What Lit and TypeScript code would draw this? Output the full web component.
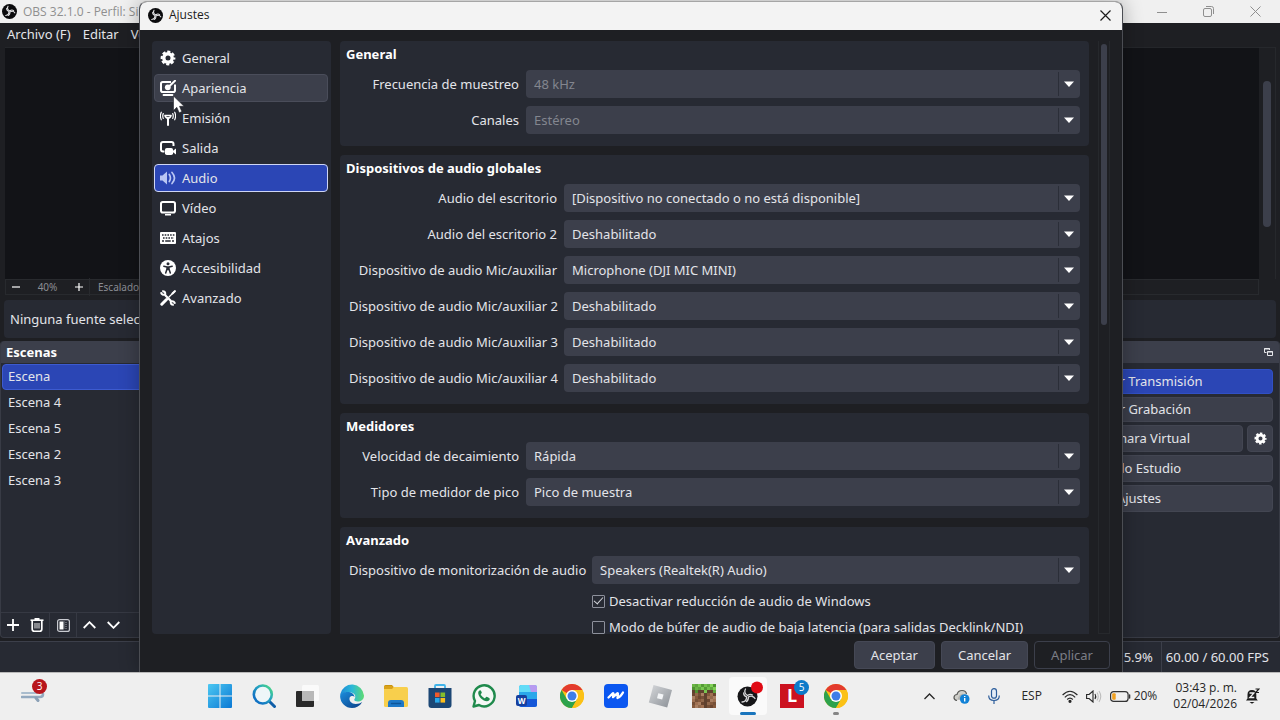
import { LitElement, html, css, svg, nothing, TemplateResult } from "lit";
import { customElement, property } from "lit/decorators.js";
import { classMap } from "lit/directives/class-map.js";

/* ---------- icons ---------- */

const obsLogo = (size: number) => html`<svg width=${size} height=${size} viewBox="0 0 24 24" aria-hidden="true">
  <circle cx="12" cy="12" r="12" fill="#0b0b0d" />
  <g fill="none" stroke="#e6e6e8" stroke-width="1.7" stroke-linecap="round">
    ${[0, 120, 240].map(
      (a) => svg`<path transform="rotate(${a} 12 12)" d="M12.4 11.2C9.6 9.6 8 6.6 9.6 3.6M12.4 11.2c1.600-1.400 4.200-2 6.200-.6" />`
    )}
  </g>
</svg>`;

const gear = html`<svg width="16" height="16" viewBox="0 0 16 16" fill="none" stroke="currentColor" aria-hidden="true">
  <circle cx="8" cy="8" r="4.200" stroke-width="3.400" />
  <circle cx="8" cy="8" r="6.300" stroke-width="2.200" stroke-dasharray="3.100 1.848" stroke-dashoffset="1.550" />
</svg>`;

const appearance = html`<svg width="16" height="16" viewBox="0 0 16 16" fill="none" stroke="currentColor" aria-hidden="true">
  <path d="M11 2H2.800Q1 2 1 3.800v6.400Q1 12 2.800 12h10.400Q15 12 15 10.200V4.500" stroke-width="2" />
  <path d="M3.500 15h9" stroke-width="1.800" stroke-linecap="round" />
  <circle cx="7.800" cy="7.300" r="2.900" fill="currentColor" stroke="none" />
  <path d="M9 6.500L15 .8" stroke-width="2" stroke-linecap="round" />
</svg>`;

const antenna = html`<svg width="16" height="16" viewBox="0 0 16 16" fill="none" stroke="currentColor" stroke-linecap="round" aria-hidden="true">
  <path d="M8 8v7" stroke-width="2" />
  <path d="M5 5.500Q5.500 8 8 8.200Q10.500 8 11 5.500" stroke-width="1.500" />
  <path d="M5.500 5.500h5" stroke-width="1.500" />
  <path d="M3.300 3.500Q2.200 6 3.300 8.500M12.700 3.500Q13.800 6 12.700 8.500M1.300 2.200Q-.5 6 1.300 9.800M14.700 2.200Q16.500 6 14.700 9.800" stroke-width="1.200" />
</svg>`;

const output = html`<svg width="16" height="16" viewBox="0 0 16 16" aria-hidden="true">
  <path d="M4.500 11.500H3Q1 11.500 1 9.500V4Q1 2 3 2h8.500Q13.500 2 13.500 4v2" fill="none" stroke="currentColor" stroke-width="2" />
  <rect x="5" y="8" width="8" height="7" rx="1.800" fill="currentColor" />
  <path d="M12 11.500l4-3v6z" fill="currentColor" />
</svg>`;

const speaker = html`<svg width="16" height="16" viewBox="0 0 16 16" fill="none" stroke="currentColor" aria-hidden="true">
  <path d="M0 5.500h2.500L7 1.500v13L2.500 10.500H0z" fill="currentColor" stroke="none" />
  <path d="M9.300 4.500Q11.500 8 9.300 11.500M12 2.500Q17 8 12 13.500" stroke-width="1.700" stroke-linecap="round" />
</svg>`;

const monitor = html`<svg width="16" height="16" viewBox="0 0 16 16" fill="none" stroke="currentColor" aria-hidden="true">
  <rect x="1" y="2" width="14" height="10.500" rx="1.800" stroke-width="2" />
  <path d="M5 14.700h6" stroke-width="1.400" />
</svg>`;

const keyboard = html`<svg width="16" height="16" viewBox="0 0 16 16" aria-hidden="true">
  <rect y="2" width="16" height="12" rx="1" fill="currentColor" />
  <g stroke="#272a33" stroke-width="1.400">
    <path d="M2 5h12.500" stroke-dasharray="1.600 1.100" />
    <path d="M3 8h11" stroke-dasharray="1.600 1.100" />
    <path d="M2 11h2M5.200 11h5.500M12 11h2" />
  </g>
</svg>`;

const accessibility = html`<svg width="16" height="16" viewBox="0 0 16 16" aria-hidden="true">
  <circle cx="8" cy="8" r="8" fill="currentColor" />
  <circle cx="8" cy="3.700" r="1.500" fill="#272a33" />
  <path d="M3.800 6.200L7 6.900V9L5.700 13M12.200 6.200L9 6.900V9l1.300 4M7 6.900h2M7.500 7v2.500h1V7" stroke="#272a33" stroke-width="1.500" fill="none" stroke-linecap="round" stroke-linejoin="round" />
</svg>`;

const tools = html`<svg width="16" height="16" viewBox="0 0 16 16" fill="none" stroke="currentColor" aria-hidden="true">
  <path d="M5 5L11 11" stroke-width="2.200" />
  <path d="M2.200 1.200Q5.800 1 5.200 4.700Q1.600 5.400 1 2.200" stroke-width="2" />
  <path d="M13.800 14.800Q10.200 15 10.800 11.300Q14.400 10.600 15 13.800" stroke-width="2" />
  <path d="M15 1L9 7" stroke-width="1.300" stroke-linecap="round" />
  <path d="M14.800 1.200L12.500 3.500" stroke-width="2" stroke-linecap="round" />
  <path d="M6.500 9.500L1.800 14.200" stroke-width="3" stroke-linecap="round" />
</svg>`;

const chromeLogo = html`<svg width="24" height="24" viewBox="0 0 24 24" aria-hidden="true">
  <circle cx="12" cy="12" r="12" fill="#fbc116" />
  <path d="M12 12L1.600 6A12 12 0 0 1 22.400 6H12z" fill="#e33b2e" />
  <path d="M1.600 6A12 12 0 0 0 12 24l5.200-9L12 12 6.800 15z" fill="#2da24c" />
  <path d="M22.400 6H12l5.200 9L12 24A12 12 0 0 0 22.400 6z" fill="#fbc116" />
  <circle cx="12" cy="12" r="6" fill="#fff" />
  <circle cx="12" cy="12" r="4.500" fill="#3f7ee8" />
</svg>`;

const grass = ["#6ab545", "#559a36", "#80d055", "#5fa53f", "#72c04b", "#4f9232", "#78c850", "#60a83f"];
const dirt = ["#85593c", "#a07152", "#6b4630", "#92694c", "#765037", "#aa8063", "#5f412e"];

const blockIcon = html`<svg width="24" height="24" viewBox="0 0 8 8" shape-rendering="crispEdges" aria-hidden="true">
  ${Array.from({ length: 64 }, (_, i) => {
    const x = i % 8;
    const y = Math.floor(i / 8);
    const green = y < 2 || (y === 2 && x % 3 === 1);
    return svg`<rect x=${x} y=${y} width="1" height="1" fill=${green ? grass[(x * 3 + y * 5) % 8] : dirt[(x * 5 + y * 3 + x * y) % 7]} />`;
  })}
</svg>`;

const taskIcons: Record<string, TemplateResult> = {
  Inicio: html`<svg width="24" height="24" viewBox="0 0 24 24" aria-hidden="true">
    <defs><linearGradient id="w" x1="0" y1="0" x2="1" y2="1"><stop offset="0" stop-color="#4cc8f2" /><stop offset="1" stop-color="#0a78d4" /></linearGradient></defs>
    <path d="M0 1Q0 0 1 0h10.500v11.500H0zM12.500 0H23Q24 0 24 1v10.500H12.500zM0 12.500h11.500V24H1Q0 24 0 23zM12.500 12.500H24V23Q24 24 23 24H12.500z" fill="url(#w)" />
  </svg>`,
  Buscar: html`<svg width="24" height="24" viewBox="0 0 24 24" fill="none" aria-hidden="true">
    <defs><linearGradient id="s" x1="0" y1="1" x2="1" y2="0"><stop offset=".2" stop-color="#1173c4" /><stop offset=".6" stop-color="#27a5c0" /><stop offset="1" stop-color="#4fe07c" /></linearGradient></defs>
    <path d="M17 17l5.500 5.500" stroke="#0f5ea8" stroke-width="3" stroke-linecap="round" />
    <circle cx="10.800" cy="10.500" r="9" fill="#eef6f8" stroke="url(#s)" stroke-width="2.600" />
  </svg>`,
  "Vista de tareas": html`<svg width="24" height="24" viewBox="0 0 24 24" aria-hidden="true">
    <rect x="0" y="7" width="18" height="16" rx="1" fill="#2a2a2a" />
    <rect x="6" y="1" width="17" height="16" rx="1.500" fill="#fafafa" />
    <path d="M6 7h12v10H7Q6 17 6 16z" fill="#b9b9b9" />
  </svg>`,
  Edge: html`<svg width="24" height="24" viewBox="0 0 24 24" aria-hidden="true">
    <defs>
      <linearGradient id="e1" x1="0" y1="0" x2="1" y2="0"><stop offset="0" stop-color="#1e8ad6" /><stop offset=".5" stop-color="#2bb8d8" /><stop offset="1" stop-color="#5edb72" /></linearGradient>
      <linearGradient id="e2" x1="0" y1="0" x2="1" y2="1"><stop offset="0" stop-color="#1b8ddd" /><stop offset="1" stop-color="#0b3f86" /></linearGradient>
    </defs>
    <path d="M.3 10A12 12 0 0 1 24 11.500c0 4-3 6-6.500 6-2.500 0-3.800-1-3-2.500 1.500-2 1-5.500-3-6.500C7 7.500 2.500 8.500.3 12z" fill="url(#e1)" />
    <path d="M.1 12C1 9 5 7.500 9 8c3.500.5 5.500 3 5.500 5-1-1.500-4-1.500-4.800.5-1.200 3 2 6.500 6 6.500 2.800 0 4.800-1 6.500-2C20 22 16 24 12 24A12 12 0 0 1 .1 12z" fill="url(#e2)" />
  </svg>`,
  Explorador: html`<svg width="24" height="24" viewBox="0 0 24 24" aria-hidden="true">
    <path d="M0 2.500Q0 1 1.500 1H8l2.500 3H0z" fill="#c9930c" />
    <rect y="3" width="24" height="20" rx="1.500" fill="#f8cf4c" />
    <path d="M0 2h8l1.500 1.500L8 5H0z" fill="#d9a21b" />
    <path d="M4 23v-4q0-3 3-3h10q3 0 3 3v4z" fill="#1d78c8" />
    <path d="M7.500 19.500h9" stroke="#0d5599" stroke-width="1.500" stroke-linecap="round" />
  </svg>`,
  "Microsoft Store": html`<svg width="24" height="24" viewBox="0 0 24 24" aria-hidden="true">
    <path d="M7 5V2q0-1 1-1h8q1 0 1 1v3" fill="none" stroke="#40b4ea" stroke-width="1.800" />
    <path d="M.5 4h23v17q0 3-3 3h-17q-3 0-3-3z" fill="#1c4775" />
    <path d="M7 8.500h4.600v4.600H7z" fill="#f05a2a" /><path d="M12.500 8.500h4.600v4.600h-4.600z" fill="#84bf2c" />
    <path d="M7 14h4.600v4.600H7z" fill="#28a8ea" /><path d="M12.500 14h4.600v4.600h-4.600z" fill="#fcbf1c" />
  </svg>`,
  WhatsApp: html`<svg width="24" height="24" viewBox="0 0 24 24" aria-hidden="true">
    <path d="M1.500 22.500L3 17A10.500 10.500 0 1 1 7 21z" fill="#f4f8f5" stroke="#1f8a4c" stroke-width="2.400" stroke-linejoin="round" />
    <path d="M8.200 6.300c-.8 0-2 1-2 2.700 0 3.500 4.800 8.300 8.600 8.300 1.800 0 3-1.300 3-2.600 0-.5-2.900-2-3.300-1.900-.6 0-1.100 1.500-1.600 1.500-1 0-4-2.700-4.200-4 0-.5 1.100-1 1.100-1.600 0-.5-1-2.400-1.600-2.400z" fill="#1f8a4c" />
  </svg>`,
  Word: html`<svg width="24" height="24" viewBox="0 0 24 24" aria-hidden="true">
    <rect x="3" y="1" width="18" height="22" rx="2.500" fill="#2aa7ea" />
    <path d="M3 8V3.500Q3 1 5.500 1h13Q21 1 21 3.500V8z" fill="#63dcf7" />
    <path d="M13 1h5.500Q21 1 21 3.500V8h-6z" fill="#b79af0" />
    <path d="M3 15h18v5.500q0 2.500-2.500 2.500h-13Q3 23 3 20.500z" fill="#1557d8" />
    <rect x="0" y="11" width="11" height="11" rx="2" fill="#163f9e" />
    <text x="5.500" y="19.500" font-size="8" font-weight="700" text-anchor="middle" fill="#fff">W</text>
  </svg>`,
  Chrome: chromeLogo,
  Meetings: html`<svg width="24" height="24" viewBox="0 0 24 24" aria-hidden="true">
    <rect width="24" height="24" rx="4" fill="#0b57f0" />
    <path d="M4.500 13.500L8.800 9.300Q9.500 9 9.500 10L9 13.200L13.300 9.300Q14 9 14 10L13.500 14Q16.500 13 19 8.500" fill="none" stroke="#fff" stroke-width="2.300" stroke-linecap="round" stroke-linejoin="round" />
  </svg>`,
  Studio: html`<svg width="24" height="24" viewBox="0 0 24 24" aria-hidden="true">
    <defs><linearGradient id="r" x1="0" y1="0" x2="1" y2="1"><stop offset="0" stop-color="#d6d8db" /><stop offset="1" stop-color="#8a8f95" /></linearGradient></defs>
    <path d="M5.500 1L24 6l-4.800 17.500L.8 18.500z" fill="url(#r)" />
    <path d="M10.300 9.200l5.200 1.300-1.300 5-5.200-1.300z" fill="#f3f5f7" />
  </svg>`,
  Bloques: blockIcon,
  "OBS Studio": html`<svg width="28" height="24" viewBox="0 0 28 24" overflow="visible" aria-hidden="true">
    <circle cx="13.500" cy="12.500" r="10" fill="#161618" />
    <g fill="none" stroke="#d8d8da" stroke-width="1.300" stroke-linecap="round">
      ${[0, 120, 240].map((a) => svg`<path transform="rotate(${a} 13.500 12.500)" d="M13.500 11.500C11 10 10 7.500 11.500 5M13.500 11.500c1.500-1 3.500-1.500 5-.5" />`)}
    </g>
    <circle cx="23" cy="3.500" r="6" fill="#e00a14" />
  </svg>`,
  Lector: html`<svg width="24" height="24" viewBox="0 0 24 24" aria-hidden="true">
    <rect width="24" height="24" fill="#cc1220" />
    <text x="12" y="18" font-size="18" font-weight="700" text-anchor="middle" fill="#fff">L</text>
  </svg>`,
  "Google Chrome": chromeLogo,
};

/* ---------- drop-down row ---------- */

@customElement("obs-select")
class ObsSelect extends LitElement {
  @property() label = "";
  @property() value = "";
  @property({ type: Boolean }) disabled = false;

  static styles = css`
    :host { display: grid; grid-template-columns: subgrid; grid-column: 1 / -1; align-items: center; }
    label { text-align: right; white-space: nowrap; color: #e3e4e9; }
    .box { display: grid; grid-template-columns: minmax(0, 1fr) 22px; height: 28px; }
    select {
      grid-area: 1 / 1 / 2 / 3; appearance: none; min-width: 0; margin: 0; padding: 0 30px 0 8px;
      border: 0; border-radius: 4px; background: #3c3f4b; color: #e3e4e9; font: inherit; opacity: 1;
    }
    select:disabled { color: #83868f; opacity: 1; }
    .arrow {
      grid-area: 1 / 2 / 2 / 3; display: flex; align-items: center; justify-content: center;
      margin: 2px 0; padding-right: 1px; border-left: 1px solid #2b2e38; pointer-events: none;
    }
  `;

  render() {
    return html`
      <label for="field">${this.label}</label>
      <div class="box">
        <select id="field" ?disabled=${this.disabled}><option>${this.value}</option></select>
        <span class="arrow"><svg width="10" height="6" viewBox="0 0 10 6" aria-hidden="true"><path d="M0 .5h10L5 6z" fill="#fff" /></svg></span>
      </div>`;
  }
}

/* ---------- settings dialog ---------- */

interface Field { label: string; value: string; disabled?: boolean }
interface Group { title: string; size: string; fields: Field[]; checks?: { label: string; on: boolean }[] }

const mic = "Dispositivo de audio Mic/auxiliar";
const off = "Deshabilitado";

const groups: Group[] = [
  { title: "General", size: "narrow", fields: [
    { label: "Frecuencia de muestreo", value: "48 kHz", disabled: true },
    { label: "Canales", value: "Estéreo", disabled: true },
  ] },
  { title: "Dispositivos de audio globales", size: "medium", fields: [
    { label: "Audio del escritorio", value: "[Dispositivo no conectado o no está disponible]" },
    { label: "Audio del escritorio 2", value: off },
    { label: mic, value: "Microphone (DJI MIC MINI)" },
    { label: `${mic} 2`, value: off },
    { label: `${mic} 3`, value: off },
    { label: `${mic} 4`, value: off },
  ] },
  { title: "Medidores", size: "narrow", fields: [
    { label: "Velocidad de decaimiento", value: "Rápida" },
    { label: "Tipo de medidor de pico", value: "Pico de muestra" },
  ] },
  { title: "Avanzado", size: "wide", fields: [
    { label: "Dispositivo de monitorización de audio", value: "Speakers (Realtek(R) Audio)" },
  ], checks: [
    { label: "Desactivar reducción de audio de Windows", on: true },
    { label: "Modo de búfer de audio de baja latencia (para salidas Decklink/NDI)", on: false },
  ] },
];

const sections: [string, TemplateResult][] = [
  ["General", gear], ["Apariencia", appearance], ["Emisión", antenna], ["Salida", output], ["Audio", speaker],
  ["Vídeo", monitor], ["Atajos", keyboard], ["Accesibilidad", accessibility], ["Avanzado", tools],
];

@customElement("settings-dialog")
class SettingsDialog extends LitElement {
  static styles = css`
    :host {
      display: flex; flex-direction: column; box-sizing: border-box; overflow: hidden;
      border: 1px solid #4b4d53; border-bottom: 0; border-top-color: #a5a5a5;
      border-radius: 8px 8px 0 0; background: #1e1f23; color: #e3e4e9;
    }
    * { box-sizing: border-box; }
    button { font: inherit; }
    .title { display: flex; align-items: center; gap: 6px; height: 28px; flex: none; padding: 0 9px 2px 8px; background: #f3f3f3; color: #1b1b1b; font-family: "Open Sans", "Noto Sans", sans-serif; font-size: 12px; }
    .title span { flex: 1; }
    .close { display: grid; place-items: center; width: 16px; height: 16px; padding: 0; border: 0; background: none; color: #1b1b1b; }
    .body { flex: 1; min-height: 0; display: flex; gap: 9px; padding: 11px 12px 0; }
    nav { width: 179px; flex: none; display: flex; flex-direction: column; gap: 2px; padding: 3px 3px 3px 2px; border-radius: 4px; background: #272a33; }
    .item { display: flex; align-items: center; gap: 6px; height: 28px; padding: 0 5px; border: 1px solid transparent; border-radius: 4px; background: none; color: #e3e4e9; text-align: left; }
    .item svg { color: #fff; }
    .item.hover { background: #3c3f4b; border-color: #4a4d5a; }
    .item.active { background: #2b46b5; border-color: #ced5f5; }
    .item.active svg { color: #b9c6f3; }
    .scroll { flex: 1; min-width: 0; display: flex; gap: 9px; }
    .groups { flex: 1; min-width: 0; overflow: hidden; display: flex; flex-direction: column; gap: 9px; }
    .group { flex: none; margin: 0; padding: 3px 9px 12px 6px; border-radius: 4px; background: #272a33; }
    h2 { margin: 0 0 6px; font-size: 13px; line-height: 20px; font-weight: 700; color: #fff; }
    .fields { display: grid; gap: 8px 7px; padding-left: 3px; }
    .narrow { grid-template-columns: 170px minmax(0, 1fr); }
    .medium { grid-template-columns: 208px minmax(0, 1fr); }
    .wide { grid-template-columns: 236px minmax(0, 1fr); }
    .check { grid-column: 2; display: flex; align-items: center; gap: 4px; height: 18px; white-space: nowrap; }
    .check input { appearance: none; display: grid; place-items: center; width: 13px; height: 13px; margin: 0; border: 1px solid #8d909b; border-radius: 1px; }
    .check input:checked::before { content: ""; width: 8px; height: 4px; margin-top: -3px; border: solid #d4d6dc; border-width: 0 0 1px 1px; transform: rotate(-48deg); }
    .track { width: 12px; flex: none; padding: 3px 2px; border: 1px solid #26282c; border-width: 0 1px 1px; }
    .thumb { height: 48%; border-radius: 3px; background: #3c3f4b; }
    footer { display: flex; justify-content: flex-end; gap: 6px; padding: 7px 12px 3px; }
    .push { height: 28px; padding: 0 16px; border: 1px solid #454855; border-radius: 4px; background: #3c3f4b; color: #e3e4e9; }
    .push:disabled { background: #1e1f23; border-color: #3c3f4b; color: #7b7d86; }
  `;

  render() {
    return html`
      <header class="title">
        ${obsLogo(15)}<span>Ajustes</span>
        <button class="close" aria-label="Cerrar"><svg width="11" height="11" viewBox="0 0 11 11" stroke="currentColor" stroke-width="1.200"><path d="M.5.5l10 10M10.500.5l-10 10" /></svg></button>
      </header>
      <div class="body">
        <nav>
          ${sections.map(([name, icon]) => html`<button class=${classMap({ item: true, hover: name === "Apariencia", active: name === "Audio" })}>${icon}<span>${name}</span></button>`)}
        </nav>
        <div class="scroll">
          <div class="groups">
            ${groups.map((g) => html`<section class="group">
              <h2>${g.title}</h2>
              <div class="fields ${g.size}">
                ${g.fields.map((f) => html`<obs-select .label=${f.label} .value=${f.value} .disabled=${!!f.disabled}></obs-select>`)}
                ${g.checks?.map((c) => html`<label class="check"><input type="checkbox" .checked=${c.on} />${c.label}</label>`) ?? nothing}
              </div>
            </section>`)}
          </div>
          <div class="track"><div class="thumb"></div></div>
        </div>
      </div>
      <footer>
        <button class="push">Aceptar</button><button class="push">Cancelar</button><button class="push" disabled>Aplicar</button>
      </footer>`;
  }
}

/* ---------- main window ---------- */

@customElement("main-window")
class MainWindow extends LitElement {
  static styles = css`
    :host { display: flex; flex-direction: column; background: #1e1f23; color: #e3e4e9; white-space: nowrap; }
    * { box-sizing: border-box; }
    button { font: inherit; color: inherit; border: 0; background: none; padding: 0; }
    .title { display: flex; align-items: center; gap: 6px; height: 23px; flex: none; padding: 0 16px 0 2px; background: #f0f0f0; color: #8f8f8f; font-family: "Open Sans", "Noto Sans", sans-serif; font-size: 12px; }
    .title span { flex: 1; }
    .wins { display: flex; gap: 30px; }
    .wins button { display: grid; place-items: center; width: 17px; height: 16px; }
    .menu { display: flex; gap: 12px; height: 24px; flex: none; align-items: center; padding: 0 7px 2px; }
    .preview { flex: 232 1 0; display: flex; padding: 0 4px 0 5px; }
    .canvas { flex: 1; background: #121317; border-top: 1px solid #24262a; }
    .vtrack { width: 17px; padding: 33px 4px 52px; border: 1px solid #26282c; border-width: 1px 1px 0 0; }
    .vthumb { height: 100%; border-radius: 4px; background: #3c3f4b; }
    .zoom { display: flex; align-items: center; height: 16px; flex: none; margin: 0 21px 0 5px; border: 1px solid #282a2e; font-size: 10px; color: #8b8d94; }
    .zoom button { width: 20px; height: 14px; display: grid; place-items: center; color: #fff; }
    .pct { width: 43px; text-align: center; }
    .scale { border-left: 1px solid #282a2e; padding-left: 8px; }
    .context { height: 38px; flex: none; display: flex; align-items: center; margin: 5px 4px 3px; padding: 0 6px; border-radius: 4px; background: #272a33; }
    .docks { flex: 297 1 0; display: flex; justify-content: space-between; }
    .dock { width: 278px; display: flex; flex-direction: column; border: 1px solid #383b45; border-top: 0; border-radius: 4px; background: #272a33; }
    .head { display: flex; align-items: center; justify-content: space-between; height: 22px; flex: none; padding: 0 6px 0 5px; border-radius: 4px 4px 0 0; background: #3c3f4b; font-weight: 700; color: #fff; }
    ul { flex: 1; margin: 0; padding: 1px; list-style: none; }
    li { height: 26px; line-height: 22px; padding: 0 5px; border: 1px solid transparent; border-radius: 4px; }
    .on { background: #2b46b5; border-color: #3d5bd0; }
    .tools { display: flex; align-items: center; height: 25px; flex: none; border-top: 1px solid #363943; color: #fff; }
    .tools button { display: grid; place-items: center; width: 24px; height: 24px; }
    .tools .wide { width: 28px; border: 1px solid #363943; border-width: 0 1px; }
    .controls { display: flex; flex-direction: column; gap: 3px; padding: 6px 6px 0 2px; }
    .controls button { height: 27px; flex: 1 0 auto; padding-bottom: 2px; border-radius: 4px; background: #3c3f4b; border: 1px solid #434652; color: #e3e4e9; }
    .controls .low { height: 25px; }
    .controls .go { background: #2b46b5; border-color: #3150c4; }
    .pair { display: flex; gap: 4px; }
    .pair .gear { flex: none; width: 26px; padding: 0; display: grid; place-items: center; color: #fff; }
    .gear svg { width: 13px; height: 13px; }
    .status { display: flex; justify-content: flex-end; align-items: center; gap: 8px; height: 31px; flex: none; margin-top: 3px; padding: 0 11px; border-top: 1px solid #3c3f4a; background: #272a33; }
    .fps { border-left: 1px solid #3c3f4a; padding-left: 4px; line-height: 30px; }
  `;

  render() {
    return html`
      <header class="title">
        ${obsLogo(15)}<span>OBS 32.1.0 - Perfil: Sin título</span>
        <div class="wins">
          <button aria-label="Minimizar"><svg width="10" height="10" viewBox="0 0 10 10" stroke="currentColor"><path d="M0 5.500h10" /></svg></button>
          <button aria-label="Restaurar"><svg width="11" height="11" viewBox="0 0 11 11" fill="none" stroke="currentColor"><rect x=".5" y="2.500" width="8" height="8" rx="1.500" /><path d="M3 .5h5.500q2 0 2 2V8" /></svg></button>
          <button aria-label="Cerrar"><svg width="11" height="11" viewBox="0 0 11 11" stroke="currentColor"><path d="M.5.5l10 10M10.500.5l-10 10" /></svg></button>
        </div>
      </header>
      <div class="menu"><button>Archivo (F)</button><button>Editar</button><button>Ver</button></div>
      <div class="preview"><div class="canvas"></div><div class="vtrack"><div class="vthumb"></div></div></div>
      <div class="zoom">
        <button aria-label="Alejar"><svg width="8" height="8" viewBox="0 0 8 8" stroke="currentColor" stroke-width="1.200"><path d="M0 4h8" /></svg></button>
        <span class="pct">40%</span>
        <button aria-label="Acercar"><svg width="8" height="8" viewBox="0 0 8 8" stroke="currentColor" stroke-width="1.200"><path d="M0 4h8M4 0v8" /></svg></button>
        <span class="scale">Escalado (768x432)</span>
      </div>
      <div class="context">Ninguna fuente seleccionada</div>
      <div class="docks">
        <section class="dock">
          <div class="head"><span>Escenas</span></div>
          <ul><li class="on">Escena</li><li>Escena 4</li><li>Escena 5</li><li>Escena 2</li><li>Escena 3</li></ul>
          <div class="tools">
            <button aria-label="Añadir"><svg width="12" height="12" viewBox="0 0 12 12" stroke="currentColor" stroke-width="1.800"><path d="M0 6h12M6 0v12" /></svg></button>
            <button aria-label="Eliminar"><svg width="14" height="14" viewBox="0 0 14 14" fill="none" stroke="currentColor"><path d="M.5 2.200h13" stroke-width="1.600" /><path d="M4.500 1h5" stroke-width="2" /><path d="M2.200 3v8.300q0 2 2 2h5.600q2 0 2-2V3" stroke-width="1.700" /><path d="M5 5v5.500M7 5v5.500M9 5v5.500" stroke-width="1.200" opacity=".75" /></svg></button>
            <button class="wide" aria-label="Filtros"><svg width="13" height="13" viewBox="0 0 13 13"><rect x=".6" y=".6" width="11.800" height="11.800" rx="2" fill="none" stroke="#c9cbd1" stroke-width="1.200" /><path d="M2.500 2.500h4v8h-4z" fill="#fff" /><path d="M7.200 2.500v8M9 3v8" stroke="#9da0a8" stroke-dasharray="1 1" /></svg></button>
            <button aria-label="Subir"><svg width="13" height="8" viewBox="0 0 13 8" fill="none" stroke="currentColor" stroke-width="1.800"><path d="M.7 7l5.800-5.800L12.300 7" /></svg></button>
            <button aria-label="Bajar"><svg width="13" height="8" viewBox="0 0 13 8" fill="none" stroke="currentColor" stroke-width="1.800"><path d="M.7 1l5.800 5.800L12.300 1" /></svg></button>
          </div>
        </section>
        <section class="dock">
          <div class="head"><span>Controles</span><svg width="9" height="8" viewBox="0 0 9 8" fill="none" stroke="#e6e7eb"><path d="M2.500 4.500h-2v-4h5V2" /><path d="M3.500 3.500h5v4h-5z" /><path d="M.5.700h5M3.500 3.700h5" stroke-width="1.400" /></svg></div>
          <div class="controls">
            <button class="low go">Detener Transmisión</button>
            <button class="low">Iniciar Grabación</button>
            <div class="pair"><button>Iniciar Cámara Virtual</button><button class="gear" aria-label="Configurar cámara virtual">${gear}</button></div>
            <button>Modo Estudio</button>
            <button>Ajustes</button>
          </div>
        </section>
      </div>
      <div class="status"><span>CPU: 5.9%</span><span class="fps">60.00 / 60.00 FPS</span></div>`;
  }
}

/* ---------- taskbar ---------- */

@customElement("task-bar")
class TaskBar extends LitElement {
  static styles = css`
    :host { display: grid; grid-template-columns: 198px auto 1fr; align-items: center; box-sizing: border-box; height: 48px; padding-bottom: 1px; border-top: 1px solid #b9b9b9; background: #efefef; color: #262626; font-family: "Open Sans", "Noto Sans", sans-serif; font-size: 12px; white-space: nowrap; }
    * { box-sizing: border-box; }
    button { position: relative; display: grid; place-items: center; flex: none; padding: 0; border: 0; background: none; color: inherit; font: inherit; }
    .weather { width: 26px; height: 40px; margin-left: 20px; }
    .apps { display: flex; }
    .app { width: 44px; height: 40px; }
    .app.current::before { content: ""; position: absolute; inset: 1px 3px; border-radius: 4px; background: #fafafa; }
    .app.current svg { position: relative; }
    .run::after { content: ""; position: absolute; bottom: 1px; left: 19px; width: 6px; height: 3px; border-radius: 2px; background: #858585; }
    .app.current::after { content: ""; position: absolute; bottom: 1px; left: 14px; width: 16px; height: 3px; border-radius: 2px; background: #1a75bd; }
    .badge { position: absolute; top: 4px; left: 24px; width: 15px; height: 15px; border-radius: 50%; background: #0d7ac9; color: #fff; font-size: 10px; line-height: 15px; text-align: center; }
    .weather .badge { top: 3px; left: 12px; background: #b8151c; }
    .tray { display: flex; justify-content: flex-end; align-items: center; padding-right: 20px; }
    .small { width: 32px; height: 32px; }
    .lang { width: 44px; height: 32px; }
    .net { display: grid; grid-auto-flow: column; align-items: center; gap: 8px; padding: 0 8px; height: 32px; }
    .power { display: flex; align-items: center; gap: 3px; }
    .clock { justify-items: end; margin: 0 8px; line-height: 16px; }
  `;

  render() {
    return html`
      <button class="weather" aria-label="Widgets">
        <svg width="24" height="12" viewBox="0 0 24 12" fill="none" stroke-linecap="round"><path d="M1 3h15" stroke="#a9bccd" stroke-width="2" /><path d="M1 7h18q3 0 3-3" stroke="#93a9bf" stroke-width="2.600" /><path d="M15 8l2 2.500" stroke="#8aa0b6" stroke-width="3" /></svg>
        <span class="badge">3</span>
      </button>
      <div class="apps">
        ${Object.entries(taskIcons).map(([name, icon]) => html`<button class=${classMap({ app: true, current: name === "OBS Studio", run: name === "Google Chrome" })} aria-label=${name}>
          ${icon}${name === "Lector" ? html`<span class="badge">5</span>` : nothing}
        </button>`)}
      </div>
      <div class="tray">
        <button class="small" aria-label="Iconos ocultos"><svg width="11" height="7" viewBox="0 0 11 7" fill="none" stroke="currentColor" stroke-width="1.300"><path d="M.5 6l5-5 5 5" /></svg></button>
        <button class="small" aria-label="OneDrive"><svg width="17" height="15" viewBox="0 0 17 15"><path d="M4 11.500Q.8 11 1 8.300T4 5.500Q5 1.500 9 1.500T13.500 5" fill="#cfcfca" stroke="#5a5a58" stroke-width="1.200" /><path d="M4.500 10.500Q5.500 6 9.500 4.500L12 9l-4 2z" fill="#b4b4b0" /><circle cx="11.700" cy="10" r="4.800" fill="#1181d6" /><path d="M11.700 9v3.500M11.700 7v1" stroke="#fff" stroke-width="1.400" /></svg></button>
        <button class="small" aria-label="Micrófono"><svg width="12" height="16" viewBox="0 0 12 16" fill="none" stroke="#2c5d9b" stroke-width="1.200"><rect x="3.500" y=".7" width="5" height="9.500" rx="2.500" fill="#e4ecf6" /><path d="M.7 7.500q0 5 5.300 5t5.300-5M6 12.500V16" /></svg></button>
        <button class="lang">ESP</button>
        <button class="net" aria-label="Red, volumen y batería">
          <svg width="16" height="13" viewBox="0 0 16 13" fill="none" stroke="currentColor" stroke-width="1.200"><path d="M.6 5Q8-2.500 15.400 5M2.800 7.300Q8 2 13.200 7.300M5.200 9.500Q8 6.800 10.800 9.500" /><circle cx="8" cy="11.300" r="1" fill="currentColor" /></svg>
          <svg width="16" height="13" viewBox="0 0 16 13" fill="none" stroke="currentColor" stroke-width="1.100"><path d="M.6 4.500h2.500L7 1v11L3.100 8.500H.6z" /><path d="M9 4q1.500 2.500 0 5" /><path d="M11 2.500q2.500 4 0 8M13 1q3.500 5.500 0 11" stroke="#bdbdbd" /></svg>
          <span class="power"><svg width="21" height="11" viewBox="0 0 21 11" fill="none"><rect x=".6" y=".6" width="17.500" height="9.800" rx="3" stroke="#333" stroke-width="1.200" /><rect x="2.200" y="2.200" width="3.500" height="6.600" rx="1" fill="#f0a020" /><path d="M19.600 4v3" stroke="#333" stroke-width="1.400" stroke-linecap="round" /></svg>20%</span>
        </button>
        <button class="clock"><span>03:43 p. m.</span><span>02/04/2026</span></button>
        <button aria-label="Notificaciones"><svg width="15" height="16" viewBox="0 0 15 16"><path d="M1 12.500l1.500-2V6.500Q2.500 2 7 2q4 0 4.300 4v4.500l1.500 2z" fill="#1c1c1c" /><path d="M4.500 14h5l-2.500 1.800z" fill="#1c1c1c" /><path d="M4.500 5h4.500L4.800 9.500h4.500" fill="none" stroke="#efefef" stroke-width="1.300" /><path d="M10.500 1h3.500l-3.300 3.500H14" fill="none" stroke="#1c1c1c" stroke-width="1.200" /></svg></button>
      </div>`;
  }
}

/* ---------- desktop ---------- */

@customElement("app-root")
class AppRoot extends LitElement {
  static styles = css`
    :host { display: flex; flex-direction: column; height: 100vh; overflow: hidden; font-family: "Noto Sans", "Open Sans", sans-serif; font-size: 13px; line-height: 18px; }
    .desktop { position: relative; flex: 1; min-height: 0; display: flex; overflow: hidden; }
    main-window { flex: 1; min-width: 0; }
    settings-dialog { position: absolute; top: 1px; right: 157px; bottom: 0; left: 139px; box-shadow: 0 0 20px rgba(0, 0, 0, 0.3); }
    .pointer { position: absolute; top: 95px; left: 173px; }
  `;

  render() {
    return html`
      <div class="desktop">
        <main-window></main-window>
        <settings-dialog></settings-dialog>
        <svg class="pointer" width="12" height="19" viewBox="0 0 12 19" aria-hidden="true"><path d="M.5 1v14.500l3.300-3.200 2.400 5.500 2.600-1.200-2.300-5.300H11z" fill="#fff" stroke="#22242a" stroke-width=".6" /></svg>
      </div>
      <task-bar></task-bar>`;
  }
}
